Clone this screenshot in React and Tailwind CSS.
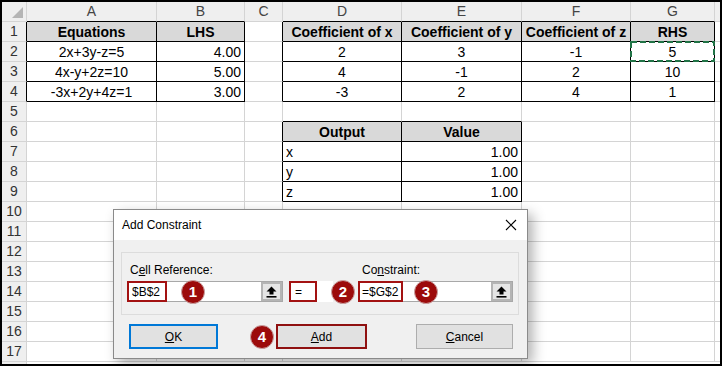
import React from 'react';

const COLS = [
  { key: 'A', w: 'w-[130px]' },
  { key: 'B', w: 'w-[88px]' },
  { key: 'C', w: 'w-[38px]' },
  { key: 'D', w: 'w-[119px]' },
  { key: 'E', w: 'w-[120px]' },
  { key: 'F', w: 'w-[109px]' },
  { key: 'G', w: 'w-[84px]' },
  { key: '', w: 'w-[60px]' },
];

// table blocks: [firstRow, lastRow, firstCol, lastCol] (cols 1 = A)
const TABLES = [
  [1, 4, 1, 2],
  [1, 4, 4, 7],
  [6, 9, 4, 5],
];
const HEAD_ROWS = { 1: true, 6: true };

const inTable = (r, c) => TABLES.some(([r1, r2, c1, c2]) => r >= r1 && r <= r2 && c >= c1 && c <= c2);

const CELLS = {
  A1: ['Equations', 'c'], B1: ['LHS', 'c'],
  A2: ['2x+3y-z=5', 'c'], B2: ['4.00', 'r'],
  A3: ['4x-y+2z=10', 'c'], B3: ['5.00', 'r'],
  A4: ['-3x+2y+4z=1', 'c'], B4: ['3.00', 'r'],
  D1: ['Coefficient of x', 'c'], E1: ['Coefficient of y', 'c'], F1: ['Coefficient of z', 'c'], G1: ['RHS', 'c'],
  D2: ['2', 'c'], E2: ['3', 'c'], F2: ['-1', 'c'], G2: ['5', 'c'],
  D3: ['4', 'c'], E3: ['-1', 'c'], F3: ['2', 'c'], G3: ['10', 'c'],
  D4: ['-3', 'c'], E4: ['2', 'c'], F4: ['4', 'c'], G4: ['1', 'c'],
  D6: ['Output', 'c'], E6: ['Value', 'c'],
  D7: ['x', 'l'], E7: ['1.00', 'r'],
  D8: ['y', 'l'], E8: ['1.00', 'r'],
  D9: ['z', 'l'], E9: ['1.00', 'r'],
};

const ALIGN = { c: 'justify-center', r: 'justify-end pr-[3px]', l: 'justify-start pl-[3px]' };

function Cell({ r, c, col }) {
  const id = col.key + r;
  const data = col.key ? CELLS[id] : null;
  const table = inTable(r, c);
  const head = table && HEAD_ROWS[r];
  const right = table || inTable(r, c + 1) ? 'border-r-black' : 'border-r-[#d4d4d4]';
  const bottom = table || inTable(r + 1, c) ? 'border-b-black' : 'border-b-[#d4d4d4]';
  return (
    <div
      className={`relative flex items-center shrink-0 h-[20px] border-r border-b ${col.w} ${right} ${bottom} ${
        head ? 'bg-[#d9d9d9] font-bold' : 'bg-white'
      } ${data ? ALIGN[data[1]] : ''}`}
    >
      {data && <span className="leading-none whitespace-nowrap">{data[0]}</span>}
      {id === 'G2' && (
        // copy marquee
        <svg className="absolute -left-px -top-px" width="85" height="21" viewBox="0 0 85 21">
          <rect x="1" y="1" width="83" height="19" fill="none" stroke="#217346" strokeWidth="2" strokeDasharray="6 3" />
        </svg>
      )}
    </div>
  );
}

function Sheet() {
  const rows = Array.from({ length: 17 }, (_, i) => i + 1);
  return (
    <div className="flex flex-col text-[14px] text-black">
      {/* column letters */}
      <div className="flex h-[20px] shrink-0">
        <div className="relative w-[25px] shrink-0 bg-[#efefef] border-r border-b border-[#d4d4d4]">
          <svg className="absolute right-[3px] bottom-[3px]" width="11" height="11" viewBox="0 0 11 11">
            <polygon points="11,0 11,11 0,11" fill="#b5b5b5" />
          </svg>
        </div>
        {COLS.map((col, i) => (
          <div
            key={i}
            className={`flex items-center justify-center shrink-0 bg-[#efefef] border-r border-r-[#d4d4d4] border-b text-[#444] ${col.w} ${
              inTable(1, i + 1) ? 'border-b-black' : 'border-b-[#d4d4d4]'
            }`}
          >
            {col.key}
          </div>
        ))}
      </div>
      {rows.map((r) => (
        <div key={r} className="flex shrink-0">
          <div
            className={`flex items-center justify-center w-[25px] h-[20px] shrink-0 bg-[#efefef] border-r border-b border-b-[#d4d4d4] text-[#333] ${
              inTable(r, 1) ? 'border-r-black' : 'border-r-[#d4d4d4]'
            }`}
          >
            {r}
          </div>
          {COLS.map((col, i) => (
            <Cell key={i} r={r} c={i + 1} col={col} />
          ))}
        </div>
      ))}
      <div className="flex h-[20px] shrink-0">
        <div className="w-[25px] shrink-0 bg-[#efefef] border-r border-[#d4d4d4]" />
      </div>
    </div>
  );
}

function Badge({ n, className }) {
  return (
    <div
      className={`absolute w-[24px] h-[24px] rounded-full bg-[#9c0b0b] border border-[#c9a0a0] flex items-center justify-center text-white font-bold text-[15px] ${className}`}
    >
      {n}
    </div>
  );
}

function RefButton() {
  return (
    <div className="w-[21px] h-full shrink-0 bg-[#e5e5e5] border-2 border-[#b4b4b4] flex items-center justify-center">
      <svg width="11" height="12" viewBox="0 0 11 12">
        <polygon points="5.5,0.5 10.5,5.5 7.5,5.5 7.5,8.5 3.5,8.5 3.5,5.5 0.5,5.5" fill="#000" />
        <rect x="0.5" y="10" width="10" height="1.6" fill="#000" />
      </svg>
    </div>
  );
}

function Dialog() {
  return (
    <div className="absolute left-[111px] top-[207px] w-[415px] h-[150px] border border-[#8a8a8a] bg-[#f0f0f0] shadow-[5px_5px_12px_rgba(0,0,0,0.3)] text-[12px] text-black">
      <div className="h-[30px] bg-white flex items-center justify-between pl-[8px] pr-[8px]">
        <span>Add Constraint</span>
        <svg width="12" height="12" viewBox="0 0 12 12" className="mr-[2px]">
          <path d="M1 1 L11 11 M11 1 L1 11" stroke="#000" strokeWidth="1.1" />
        </svg>
      </div>

      <div className="ml-[7px] mt-[12px] w-[398px] h-[63px] border border-[#dcdcdc] pt-[9px] px-[5px]">
        <div className="flex h-[16px] items-center">
          <div className="w-[231px] pl-[3px]">
            C<span className="underline">e</span>ll Reference:
          </div>
          <div className="pl-[4px]">
            Co<span className="underline">n</span>straint:
          </div>
        </div>
        <div className="flex mt-[3px] h-[21px]">
          <div className="w-[156px] h-full flex bg-white border border-[#a8a8a8]">
            <span className="w-[40px] -m-px h-[21px] border-2 border-[#a31212] flex items-center pl-[3px]">$B$2</span>
            <div className="flex-1" />
            <RefButton />
          </div>
          <div className="w-[44px] h-full ml-[6px] bg-white">
            <span className="w-[28px] h-full border-2 border-[#a31212] flex items-center pl-[4px]">=</span>
          </div>
          <div className="w-[155px] h-full ml-[25px] flex bg-white border border-[#a8a8a8]">
            <span className="w-[45px] -m-px h-[21px] border-2 border-[#a31212] flex items-center pl-[2px]">=$G$2</span>
            <div className="flex-1" />
            <RefButton />
          </div>
        </div>
      </div>

      <div className="flex mt-[9px] ml-[15px] h-[25px]">
        <div className="w-[89px] h-full bg-[#e1e1e1] border-2 border-[#0078d7] flex items-center justify-center">
          <span className="underline">O</span>K
        </div>
        <div className="w-[91px] h-full ml-[58px] bg-[#e1e1e1] border-2 border-[#8f1010] flex items-center justify-center">
          <span className="underline">A</span>dd
        </div>
        <div className="w-[97px] h-full ml-[49px] bg-[#e1e1e1] border border-[#adadad] flex items-center justify-center">
          <span className="underline">C</span>ancel
        </div>
      </div>

      <Badge n="1" className="left-[67px] top-[70px]" />
      <Badge n="2" className="left-[217px] top-[70px]" />
      <Badge n="3" className="left-[300px] top-[70px]" />
      <Badge n="4" className="left-[136px] top-[115px]" />
    </div>
  );
}

export default function App() {
  return (
    <div className="relative w-[722px] h-[366px] overflow-hidden border-2 border-black bg-white font-['Liberation_Sans',Arial,sans-serif]">
      <Sheet />
      <Dialog />
    </div>
  );
}
